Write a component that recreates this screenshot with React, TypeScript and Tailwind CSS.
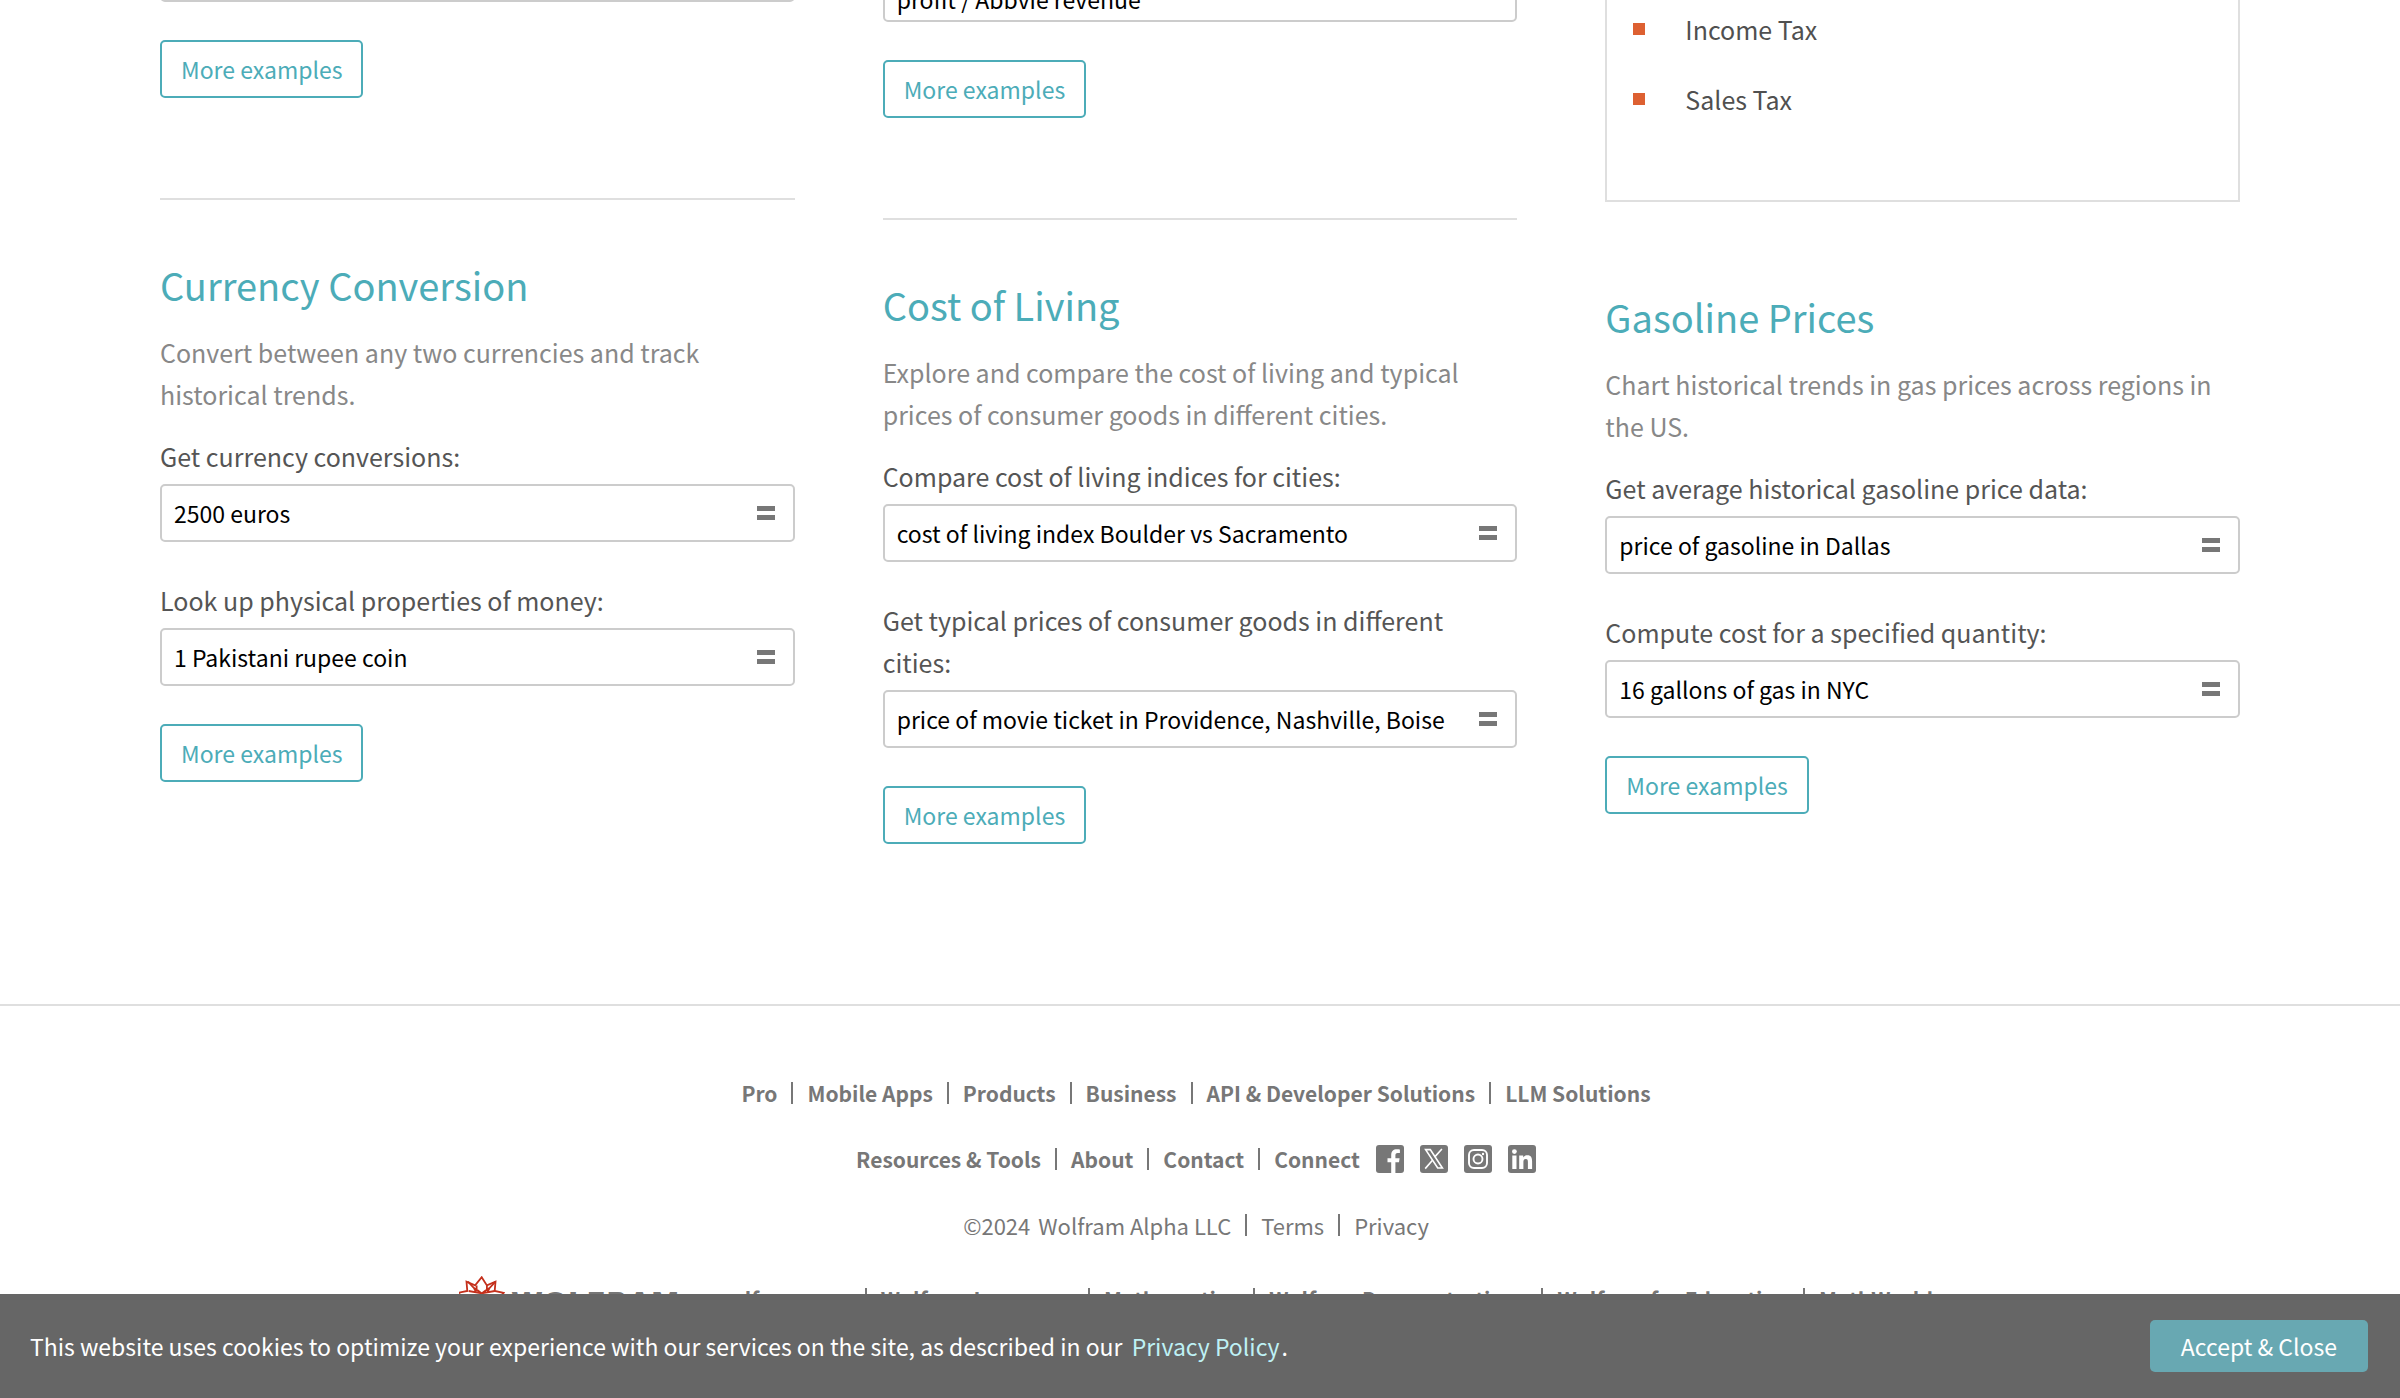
import React, { Fragment, useId, type ReactNode } from "react";

function MoreExamples() {
  return (
    <button
      type="button"
      className="mt-[38px] block h-[58px] rounded-[5px] border-2 border-[#4cacb8] px-[19px] text-[23px] text-[#4cacb8]"
    >
      More examples
    </button>
  );
}

function Example({ label, query }: { label: string; query: string }) {
  const id = useId();
  return (
    <div>
      <label htmlFor={id} className="block pr-4 text-[25px] leading-[42px] text-[#555]">
        {label}
      </label>
      <div className="mt-[7px] flex h-[58px] items-center rounded-[5px] border-2 border-[#ccc] pr-[18px]">
        <input
          id={id}
          defaultValue={query}
          className="h-full min-w-0 flex-1 pl-3 text-[23px] text-black outline-none"
        />
        <button type="button" aria-label="Compute" className="grid shrink-0 gap-1">
          <span className="block h-[5px] w-[18px] bg-[#777]" />
          <span className="block h-[5px] w-[18px] bg-[#777]" />
        </button>
      </div>
    </div>
  );
}

type Topic = { title: string; about: string; examples: [string, string][] };

function TopicSection({ topic }: { topic: Topic }) {
  return (
    <section>
      <h2 className="text-[38px] leading-[48px]">
        <a href="#" className="text-[#4cacb8]">
          {topic.title}
        </a>
      </h2>
      <p className="mt-[22px] text-[25px] leading-[42px] text-[#888]">{topic.about}</p>
      <div className="mt-5 grid gap-[37px]">
        {topic.examples.map(([label, query]) => (
          <Example key={label} label={label} query={query} />
        ))}
      </div>
      <MoreExamples />
    </section>
  );
}

const currency: Topic = {
  title: "Currency Conversion",
  about: "Convert between any two currencies and track historical trends.",
  examples: [
    ["Get currency conversions:", "2500 euros"],
    ["Look up physical properties of money:", "1 Pakistani rupee coin"],
  ],
};

const living: Topic = {
  title: "Cost of Living",
  about: "Explore and compare the cost of living and typical prices of consumer goods in different cities.",
  examples: [
    ["Compare cost of living indices for cities:", "cost of living index Boulder vs Sacramento"],
    [
      "Get typical prices of consumer goods in different cities:",
      "price of movie ticket in Providence, Nashville, Boise",
    ],
  ],
};

const gasoline: Topic = {
  title: "Gasoline Prices",
  about: "Chart historical trends in gas prices across regions in the US.",
  examples: [
    ["Get average historical gasoline price data:", "price of gasoline in Dallas"],
    ["Compute cost for a specified quantity:", "16 gallons of gas in NYC"],
  ],
};

function LongQuery({ value, name }: { value: string; name: string }) {
  return (
    <textarea
      rows={1}
      aria-label={name}
      defaultValue={value}
      className="block h-12 w-full resize-none overflow-hidden rounded-[5px] border-2 border-[#ccc] px-3 py-[7px] text-[23px] leading-8 text-black"
    />
  );
}

function Rule() {
  return <hr className="mt-[100px] mb-[61px] border-t-2 border-[#dfdfdf]" />;
}

function LinkRow({ items, children, className }: { items: string[]; children?: ReactNode; className: string }) {
  return (
    <div className={className}>
      {items.map((item, i) => (
        <Fragment key={item}>
          {i > 0 && <span className="mx-[14px] h-[22px] w-[2px] bg-[#777]" />}
          <a href="#">{item}</a>
        </Fragment>
      ))}
      {children}
    </div>
  );
}

function SocialIcons() {
  const tile = <rect width="28" height="28" rx="3" fill="#777" stroke="none" />;
  return (
    <span className="ml-4 flex gap-4">
      <a href="#" aria-label="Facebook">
        <svg viewBox="0 0 28 28" className="size-7">
          {tile}
          <path
            d="M15.2 28V17.3h-3.7v-4h3.7V10c0-3.9 2.2-5.8 5.6-5.8 1.3 0 2.6.1 3.1.2v3.7h-2.2c-1.900 0-2.300 1-2.300 2.400v2.800h4.200l-.6 4h-3.600V28z"
            fill="#fff"
          />
        </svg>
      </a>
      <a href="#" aria-label="X">
        <svg viewBox="0 0 28 28" className="size-7" fill="none" stroke="#fff" strokeWidth="1.6">
          {tile}
          <path d="M5.6 4.6h4.7L22.4 23h-4.7z" />
          <path d="M21.9 4l-7.3 8.1M12.5 15.3L5.2 23.6" />
        </svg>
      </a>
      <a href="#" aria-label="Instagram">
        <svg viewBox="0 0 28 28" className="size-7" fill="none" stroke="#fff" strokeWidth="1.9">
          {tile}
          <rect x="5" y="5" width="18" height="18" rx="5" />
          <circle cx="14" cy="14" r="4.5" />
          <circle cx="19" cy="9" r="1.2" fill="#fff" stroke="none" />
        </svg>
      </a>
      <a href="#" aria-label="LinkedIn">
        <svg viewBox="0 0 28 28" className="size-7">
          {tile}
          <g fill="#fff">
            <circle cx="6.4" cy="6.6" r="2.4" />
            <path d="M4.3 10.6h4.2V24H4.3zM11.2 10.6h4v1.9c.8-1.3 2.2-2.2 4.1-2.2 4 0 4.8 2.6 4.8 6.1V24h-4.2v-6.8c0-1.6 0-3.3-2.1-3.3s-2.4 1.6-2.4 3.3V24h-4.2z" />
          </g>
        </svg>
      </a>
    </span>
  );
}

function Spikey() {
  return (
    <svg
      viewBox="0 0 46 46"
      className="size-[46px]"
      fill="none"
      stroke="#c4301c"
      strokeWidth="1.8"
      aria-hidden="true"
    >
      <path d="M22.7 1.2l5.2 8.2 8.6-3.7-.8 9.3 9 1.8-6.4 6.8 5.6 7.6-9.2 1.8.2 9.2-8.4-3.6-4.5 7.6-4.5-7.6-8.4 3.6.2-9.2-9.2-1.8 5.6-7.6-6.4-6.8 9-1.8-.8-9.3 8.6 3.7z" />
      <path d="M17.6 9.4v4l5.1 4 5.2-4v-4M9 5.7l6 6.3 7.7 5.4 7.8-5.4 6-6.3M9.7 15l13 2.4 13-2.4M15 12l2 4M30.5 12l-2 4M22.7 17.4v8" />
    </svg>
  );
}

export default function App() {
  return (
    <div className="min-h-screen bg-white font-['Noto_Sans_CJK_SC',sans-serif]">
      <main className="grid grid-cols-3 items-start gap-x-22 px-40 pb-40">
        <div className="-mt-[46px]">
          <LongQuery name="Example query" value="" />
          <MoreExamples />
          <Rule />
          <TopicSection topic={currency} />
        </div>
        <div className="-mt-[26px]">
          <LongQuery name="Company revenue query" value="profit / Abbvie revenue" />
          <MoreExamples />
          <Rule />
          <TopicSection topic={living} />
        </div>
        <div>
          <ul className="mb-[91px] grid gap-7 border-2 border-t-0 border-[#dfdfdf] pt-2 pb-20 pl-[26px] text-[25px] leading-[42px] text-[#505050]">
            {["Income Tax", "Sales Tax"].map((item) => (
              <li key={item} className="flex items-center gap-10">
                <span className="size-3 bg-[#dd6031]" />
                <a href="#">{item}</a>
              </li>
            ))}
          </ul>
          <TopicSection topic={gasoline} />
        </div>
      </main>

      <footer className="border-t-2 border-[#dfdfdf] pt-[73px] pr-2 text-[21px] leading-7 text-[#777]">
        <LinkRow
          className="flex h-7 items-center justify-center font-bold"
          items={["Pro", "Mobile Apps", "Products", "Business", "API & Developer Solutions", "LLM Solutions"]}
        />
        <LinkRow
          className="mt-[38px] flex h-7 items-center justify-center font-bold"
          items={["Resources & Tools", "About", "Contact", "Connect"]}
        >
          <SocialIcons />
        </LinkRow>
        <div className="mt-[38px] flex h-7 items-center justify-center gap-2 text-[22px]">
          <span>©2024</span>
          <LinkRow className="flex items-center" items={["Wolfram Alpha LLC", "Terms", "Privacy"]} />
        </div>
        <div className="mt-[46px] flex h-7 items-center justify-center">
          <a href="#" className="mr-[34px] flex items-center gap-[6px]">
            <Spikey />
            <span className="mt-2 font-['DejaVu_Sans',sans-serif] text-[29px] font-bold">WOLFRAM</span>
          </a>
          <LinkRow
            className="flex items-center font-bold"
            items={[
              "wolfram.com",
              "Wolfram Language",
              "Mathematica",
              "Wolfram Demonstrations",
              "Wolfram for Education",
              "MathWorld",
            ]}
          />
        </div>
      </footer>

      <div
        role="region"
        aria-label="Cookie notice"
        className="fixed inset-x-0 bottom-0 flex items-center justify-between bg-[#666] py-[26px] pr-8 pl-[30px] text-[23px] text-white"
      >
        <p>
          This website uses cookies to optimize your experience with our services on the site, as described in our{" "}
          <a href="#" className="mr-[2px] ml-1 text-[#bef1f5]">
            Privacy Policy
          </a>
          .
        </p>
        <button type="button" className="h-13 rounded-[5px] bg-[#68a8b2] px-[31px]">
          Accept &amp; Close
        </button>
      </div>
    </div>
  );
}
